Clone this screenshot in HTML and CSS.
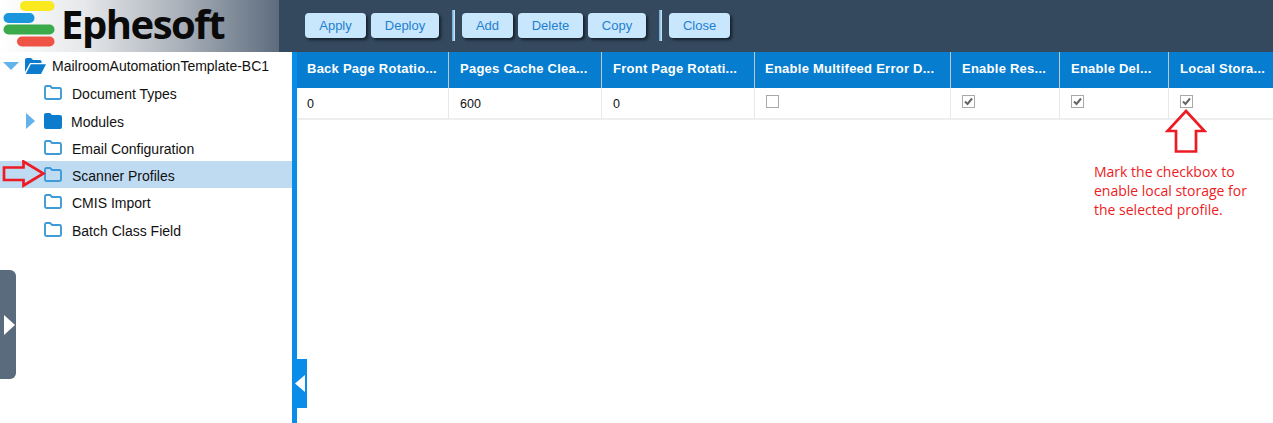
FILE: index.html
```html
<!DOCTYPE html>
<html lang="en">
<head>
<meta charset="utf-8">
<title>Ephesoft</title>
<link rel="stylesheet" href="styles.css">
</head>
<body>
<svg width="0" height="0" class="defs">
  <symbol id="folder" viewBox="0 0 18 15"><path d="M1 3V2.500A1.500 1.500 0 0 1 2.500 1h3.600l2 2h7.400A1.500 1.500 0 0 1 17 4.500v8A1.500 1.500 0 0 1 15.500 14h-13A1.500 1.500 0 0 1 1 12.500z" fill="none" stroke="#3f9ad8" stroke-width="1.900"/></symbol>
</svg>
<header class="topbar">
  <div class="brand">
    <svg class="brand-mark" width="56" height="48" viewBox="0 0 56 48">
      <rect x="20" y="1" width="34.500" height="10" rx="5" fill="#fbe91f"/>
      <rect x="3.500" y="13" width="31" height="10" rx="5" fill="#1b95dc"/>
      <rect x="3.500" y="24.500" width="51" height="10" rx="5" fill="#3aaa4a"/>
      <rect x="17" y="36.500" width="37.500" height="10" rx="5" fill="#ef5345"/>
    </svg>
    <span class="brand-name">Ephesoft</span>
  </div>
  <nav class="toolbar">
    <button class="btn btn-apply">Apply</button>
    <button class="btn btn-deploy">Deploy</button>
    <span class="sep"></span>
    <button class="btn btn-add">Add</button>
    <button class="btn btn-delete">Delete</button>
    <button class="btn btn-copy">Copy</button>
    <span class="sep"></span>
    <button class="btn btn-close">Close</button>
  </nav>
</header>
<main class="workspace">
  <aside class="tree">
    <div class="node node-root">
      <svg class="twist-down" width="16" height="8" viewBox="0 0 16 8"><path d="M0 0h16L8 8z" fill="#62b2ec"/></svg>
      <svg class="folder-open" width="21" height="16" viewBox="0 0 21 16"><path d="M0 14V2a2 2 0 0 1 2-2h4l2 2h7a1.500 1.500 0 0 1 1.500 1.500V5H5L0 14zM5.800 6.200H21L16 16H0.800z" fill="#0d7ccc"/></svg>
      <span class="label">MailroomAutomationTemplate-BC1</span>
    </div>
    <div class="node node-child"><svg class="folder"><use href="#folder"/></svg><span class="label">Document Types</span></div>
    <div class="node node-child node-modules">
      <svg class="twist-right" width="9" height="16" viewBox="0 0 9 16"><path d="M0 0l9 8-9 8z" fill="#62b2ec"/></svg>
      <svg class="folder-solid" width="18" height="16" viewBox="0 0 18 16"><path d="M0 2a2 2 0 0 1 2-2h4l2 2h8a2 2 0 0 1 2 2v10a2 2 0 0 1-2 2H2a2 2 0 0 1-2-2z" fill="#0d7ccc"/></svg>
      <span class="label">Modules</span>
    </div>
    <div class="node node-child node-email"><svg class="folder"><use href="#folder"/></svg><span class="label">Email Configuration</span></div>
    <div class="node node-child node-selected"><svg class="folder"><use href="#folder"/></svg><span class="label">Scanner Profiles</span></div>
    <div class="node node-child node-cmis"><svg class="folder"><use href="#folder"/></svg><span class="label">CMIS Import</span></div>
    <div class="node node-child node-batch"><svg class="folder"><use href="#folder"/></svg><span class="label">Batch Class Field</span></div>
  </aside>
  <div class="splitter"></div>
  <section class="content">
    <div class="grid">
      <div class="th">Back Page Rotatio...</div>
      <div class="th">Pages Cache Clea...</div>
      <div class="th">Front Page Rotati...</div>
      <div class="th">Enable Multifeed Error D...</div>
      <div class="th">Enable Res...</div>
      <div class="th">Enable Del...</div>
      <div class="th">Local Stora...</div>
      <div class="td">0</div>
      <div class="td">600</div>
      <div class="td">0</div>
      <div class="td"><span class="check"></span></div>
      <div class="td"><span class="check"><svg width="11" height="11" viewBox="0 0 11 11"><path d="M2 5.500l2.500 2.500L9 2.500" fill="none" stroke="#666" stroke-width="2"/></svg></span></div>
      <div class="td"><span class="check"><svg width="11" height="11" viewBox="0 0 11 11"><path d="M2 5.500l2.500 2.500L9 2.500" fill="none" stroke="#666" stroke-width="2"/></svg></span></div>
      <div class="td"><span class="check"><svg width="11" height="11" viewBox="0 0 11 11"><path d="M2 5.500l2.500 2.500L9 2.500" fill="none" stroke="#666" stroke-width="2"/></svg></span></div>
    </div>
  </section>
</main>
<div class="tab-left"><svg width="12" height="20" viewBox="0 0 12 20"><path d="M0 0l11 10L0 20z" fill="#fff"/></svg></div>
<div class="tab-right"><svg width="10" height="17" viewBox="0 0 10 17"><path d="M10 0L0 8.500 10 17z" fill="#fff"/></svg></div>
<svg class="arrow-right" width="44" height="28" viewBox="0 0 44 28"><path d="M2 7.500H21.500V1.500L41.500 13.500 21.500 25.500V20H2z" fill="none" stroke="#ed1c24" stroke-width="2.700"/></svg>
<svg class="arrow-up" width="42" height="44" viewBox="0 0 42 44"><path d="M21 2L39.500 22H31V42.500H11V22H2.500z" fill="none" stroke="#ed1c24" stroke-width="2.700"/></svg>
<p class="note">Mark the checkbox to<br>enable local storage for<br>the selected profile.</p>
</body>
</html>
```
FILE: styles.css
```css
* { box-sizing: border-box; }
html, body { margin: 0; height: 423px; overflow: hidden; background: #fff; }
body { position: relative; font-family: "Liberation Sans", Arial, sans-serif; color: #111; }
.defs { position: absolute; }

.topbar { display: flex; height: 52px; background: #34495e; }
.brand {
  width: 279px; display: flex; align-items: flex-start;
  background: linear-gradient(90deg, #ffffff 0%, #e6e8ea 30%, #a9b0b9 65%, #5d6c7d 100%);
}
.brand-mark { flex: none; }
.brand-name {
  margin: 0 0 0 5px; font-family: "Open Sans", sans-serif; font-weight: 700;
  font-size: 40px; line-height: 47px; letter-spacing: -1.500px; color: #0a0a0a;
}
.toolbar { display: flex; align-items: center; padding: 0 0 1px 26px; gap: 5px; }
.btn {
  height: 25px; padding: 0; border: 0; border-radius: 4px; background: #c9e7fc; color: #1f80d0;
  font: 13px "Liberation Sans", Arial, sans-serif; box-shadow: 2px 2px 3px #16202b;
}
.btn-apply { width: 61px; }
.btn-deploy { width: 68px; }
.btn-add { width: 51px; }
.btn-delete { width: 65px; }
.btn-copy { width: 58px; }
.btn-close { width: 61px; }
.sep { width: 3px; height: 31px; margin: 0 2px 0 8px; background: linear-gradient(90deg, #5aa7e0, #dfe9ef); }

.workspace { display: flex; height: 371px; }
.tree { width: 292px; flex: none; font-size: 14px; }
.node { display: flex; align-items: center; height: 27px; }
.node-root { height: 28px; }
.node-child { padding-left: 44px; }
.label { white-space: nowrap; }
.node-root .label { margin-left: 6px; }
.twist-down { margin: 0 6px 0 3px; }
.folder { width: 18px; height: 15px; margin: -3px 10px 0 0; }
.node-modules { height: 28px; padding: 2px 0 0 26px; }
.node-email { height: 26px; padding-top: 2px; }
.node-selected { background: #bedbf1; padding-top: 2px; }
.node-cmis { height: 28px; padding-top: 1px; }
.node-batch { height: 28px; padding-top: 2px; }
.twist-right { margin: -3px 9px 0 0; }
.folder-solid { margin: -3px 9px 0 0; }

.splitter { width: 5px; flex: none; background: #0a8de8; }
.content { flex: 1; min-width: 0; }
.grid { display: grid; grid-template-columns: 152px 153px 153px 196px 109px 109px 1fr; }
.th, .td { border-right: 1px solid #e8e8e8; padding-left: 11px; white-space: nowrap; overflow: hidden; }
.th:nth-child(1), .th:nth-child(4), .td:nth-child(8) { padding-left: 10px; }
.th {
  height: 36px; padding-top: 9px; background: #067dcf; color: #fff; font-weight: 700; font-size: 13px;
  letter-spacing: 0.250px; border-right-color: #b9c7d2;
}
.td { height: 32px; padding-top: 9px; font-size: 12.500px; color: #111; border-bottom: 2px solid #eee; }
.th:nth-child(7), .td:last-child { border-right: 0; }
.check {
  display: flex; align-items: center; justify-content: center; width: 13px; height: 13px; margin: -2px 0 0 0;
  border: 1px solid #a9a9a9; background: #fff;
}

.tab-left {
  position: absolute; left: 0; top: 270px; width: 16px; height: 109px; padding: 45px 0 0 4px;
  background: #5a6b7d; border-radius: 0 6px 6px 0;
}
.tab-right {
  position: absolute; left: 292px; top: 359px; width: 15px; height: 49px; padding: 16px 0 0 3px;
  background: #0a8de8;
}
.tab-left svg, .tab-right svg { display: block; }
.arrow-right { position: absolute; left: 2px; top: 160px; }
.arrow-up { position: absolute; left: 1165px; top: 109px; }
.note {
  position: absolute; left: 1094px; top: 162px; margin: 0; font: 14px/19px "Open Sans", sans-serif; color: #ed1c24;
}
```
